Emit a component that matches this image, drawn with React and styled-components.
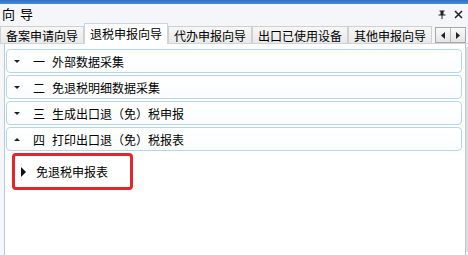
import React from 'react';
import styled, { createGlobalStyle } from 'styled-components';

const GlobalStyle = createGlobalStyle`
  html, body {
    margin: 0;
    padding: 0;
    background: #ffffff;
  }
  body {
    font-family: "Noto Sans CJK SC", "Noto Sans", sans-serif;
  }
`;

const Window = styled.div`
  width: 468px;
  height: 255px;
  overflow: hidden;
  display: flex;
  flex-direction: column;
  background: #f4f6f9;
  color: #000;
`;

const TopStrip = styled.div`
  height: 4px;
  background: linear-gradient(#2f6fc4, #4a8ad8);
`;

const TitleBar = styled.div`
  height: 20px;
  display: flex;
  align-items: center;
  justify-content: space-between;
  padding: 0 5px 0 2px;
  font-size: 13px;
  line-height: 20px;
`;

const Title = styled.span`
  word-spacing: 2px;
`;

const TitleTools = styled.div`
  display: flex;
  align-items: center;
  gap: 8px;
`;

const TabBar = styled.div`
  height: 20px;
  display: flex;
  align-items: flex-end;
  position: relative;
`;

const Tab = styled.div`
  height: ${p => (p.$active ? '21px' : '18px')};
  box-sizing: border-box;
  padding: 0 5px;
  font-size: 12px;
  line-height: ${p => (p.$active ? '19px' : '17px')};
  white-space: nowrap;
  background: ${p => (p.$active ? '#ffffff' : 'linear-gradient(#f7f7f7, #e9e9e9)')};
  border: 1px solid ${p => (p.$active ? '#c9d6e2' : '#d0d0d0')};
  border-bottom: ${p => (p.$active ? 'none' : '1px solid #c9d6e2')};
  z-index: ${p => (p.$active ? 2 : 1)};
`;

const Spacer = styled.div`
  flex: 1;
  height: 100%;
  border-bottom: 1px solid #c9d6e2;
  box-sizing: border-box;
`;

const ScrollButtons = styled.div`
  position: absolute;
  right: 2px;
  top: 3px;
  display: flex;
  border: 1px solid #a8a8a8;
  background: linear-gradient(#fafafa, #e4e4e4);
`;

const ScrollButton = styled.div`
  width: 14px;
  height: 14px;
  display: flex;
  align-items: center;
  justify-content: center;
  & + & {
    border-left: 1px solid #b8b8b8;
  }
`;

const Content = styled.div`
  flex: 1;
  display: flex;
  flex-direction: column;
  gap: 2px;
  margin: 0 2px 0 4px;
  padding: 5px 1px 0 1px;
  background: #ffffff;
  border-left: 1px solid #b6cadb;
  border-right: 1px solid #b6cadb;
  box-shadow: 5px 0 0 -3px #dcdcdc;
`;

const Header = styled.div`
  height: 24px;
  box-sizing: border-box;
  display: flex;
  align-items: center;
  padding-left: 7px;
  border: 1px solid #b5d6ea;
  border-radius: 4px;
  background: linear-gradient(#ffffff, #fafcfe);
  font-size: 12px;
  margin-right: 2px;
`;

const Arrow = styled.span`
  width: 0;
  height: 0;
  border-left: 3px solid transparent;
  border-right: 3px solid transparent;
  ${p => (p.$up ? 'border-bottom: 3px solid #222;' : 'border-top: 3px solid #222;')}
  margin-right: 13px;
`;

const Num = styled.span`
  margin-right: 7px;
`;

const Item = styled.div`
  margin: 0 0 0 6px;
  width: 121px;
  height: 37px;
  box-sizing: border-box;
  border: 3px solid #e3262a;
  border-radius: 4px;
  display: flex;
  align-items: center;
  padding-left: 6px;
  font-size: 12px;
`;

const PlayArrow = styled.span`
  width: 0;
  height: 0;
  border-top: 5px solid transparent;
  border-bottom: 5px solid transparent;
  border-left: 5px solid #111;
  margin-right: 10px;
`;

const steps = [
  ['一', '外部数据采集'],
  ['二', '免退税明细数据采集'],
  ['三', '生成出口退（免）税申报'],
  ['四', '打印出口退（免）税报表'],
];

const tabs = ['备案申请向导', '退税申报向导', '代办申报向导', '出口已使用设备', '其他申报向导'];

export default function App() {
  return (
    <Window>
      <GlobalStyle />
      <TopStrip />
      <TitleBar>
        <Title>向 导</Title>
        <TitleTools>
          <svg width="8" height="9" viewBox="0 0 8 9">
            <path d="M1.5 0.5h5v1h-1v3h2v1h-3v3.5h-1V5.5h-3v-1h2v-3h-1z" fill="#222" />
          </svg>
          <svg width="9" height="9" viewBox="0 0 9 9">
            <path d="M1 1L8 8M8 1L1 8" stroke="#222" strokeWidth="1.5" />
          </svg>
        </TitleTools>
      </TitleBar>
      <TabBar>
        {tabs.map((t, i) => (
          <Tab key={t} $active={i === 1}>{t}</Tab>
        ))}
        <Spacer />
        <ScrollButtons>
          <ScrollButton>
            <svg width="4" height="7" viewBox="0 0 4 7"><path d="M4 0v7L0 3.5z" fill="#222" /></svg>
          </ScrollButton>
          <ScrollButton>
            <svg width="4" height="7" viewBox="0 0 4 7"><path d="M0 0v7l4-3.5z" fill="#222" /></svg>
          </ScrollButton>
        </ScrollButtons>
      </TabBar>
      <Content>
        {steps.map(([n, label], i) => (
          <Header key={n}>
            <Arrow $up={i === 3} />
            <Num>{n}</Num>
            {label}
          </Header>
        ))}
        <Item>
          <PlayArrow />
          免退税申报表
        </Item>
      </Content>
    </Window>
  );
}
